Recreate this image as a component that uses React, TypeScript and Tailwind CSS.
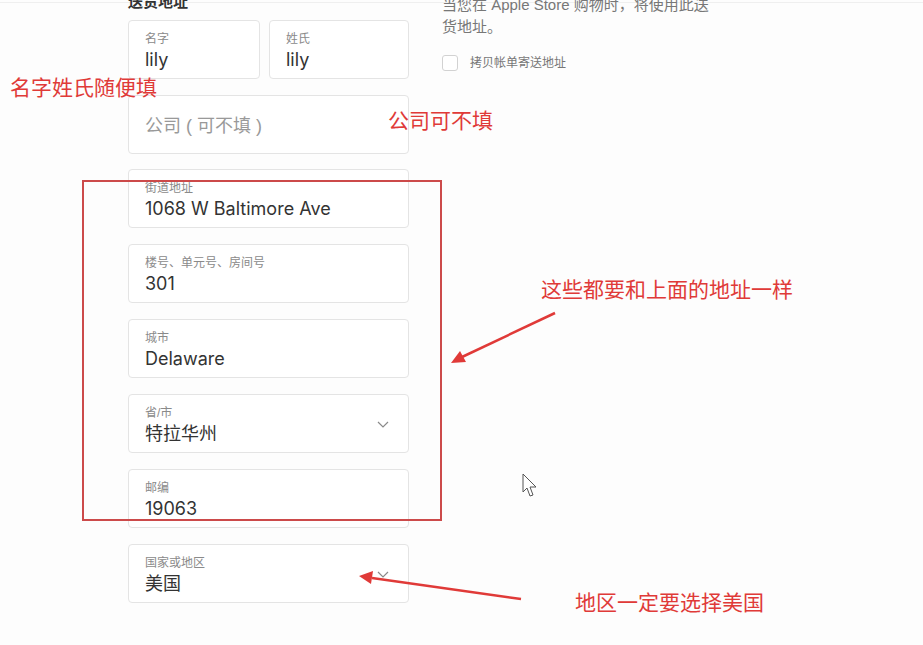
import React from 'react';

const FONT = { fontFamily: '"Liberation Sans", "Noto Sans CJK SC", sans-serif' };
const VALUE_FONT = { fontFamily: 'Inter, "Noto Sans CJK SC", sans-serif' };

function Field({ label, value, select, className = '' }: { label: string; value: string; select?: boolean; className?: string }) {
  return (
    <div className={`relative h-[59px] rounded-[4px] border border-[#e4e4e4] bg-white px-[16px] pt-[11px] ${className}`}>
      <div className="text-[12px] leading-[14px] text-[#8a8a8a]">{label}</div>
      <div className="mt-[3px] text-[18px] leading-[22px] text-[#333]" style={VALUE_FONT}>
        {value}
      </div>
      {select && (
        <svg className="absolute right-[19px] top-[26px]" width="12" height="7" viewBox="0 0 12 7">
          <path d="M1 1l5 5 5-5" fill="none" stroke="#8a8a8a" strokeWidth="1.2" />
        </svg>
      )}
    </div>
  );
}

function Note({ children, className }: { children: React.ReactNode; className: string }) {
  return <div className={`absolute text-[21px] leading-[24px] text-[#e03a38] ${className}`}>{children}</div>;
}

export default function App() {
  return (
    <div className="relative h-[645px] w-[923px] overflow-hidden bg-[#fdfdfd]" style={FONT}>
      <div className="mt-[2px] flex gap-[33px] border-t border-[#efefef] pl-[128px]">
        <div className="flex w-[281px] flex-col">
          <div className="mt-[-11px] text-[15px] font-bold leading-[20px] text-[#333]">送货地址</div>
          <div className="mt-[8px] flex gap-[9px]">
            <Field label="名字" value="lily" className="w-[132px]" />
            <Field label="姓氏" value="lily" className="flex-1" />
          </div>
          <div className="mt-[16px] flex h-[59px] items-center rounded-[4px] border border-[#e4e4e4] bg-white px-[16px] pt-[3px] text-[18px] text-[#999]">
            公司 ( 可不填 )
          </div>
          <div className="mt-[15px] flex flex-col gap-[16px]">
            <Field label="街道地址" value="1068 W Baltimore Ave" />
            <Field label="楼号、单元号、房间号" value="301" />
            <Field label="城市" value="Delaware" />
            <Field label="省/市" value="特拉华州" select />
            <Field label="邮编" value="19063" />
            <Field label="国家或地区" value="美国" select />
          </div>
        </div>
        <div className="w-[278px]">
          <p className="mt-[-9px] text-[15px] leading-[22px] text-[#777]">当您在 Apple Store 购物时，将使用此送货地址。</p>
          <label className="mt-[16px] flex items-center gap-[12px]">
            <span className="h-[16px] w-[16px] rounded-[3px] border border-[#d2d2d2] bg-white" />
            <span className="text-[12px] text-[#777]">拷贝帐单寄送地址</span>
          </label>
        </div>
      </div>

      <div className="absolute left-[82px] top-[180px] h-[341px] w-[360px] border-2 border-[#cc4a4a]" />
      <Note className="left-[10px] top-[76px]">名字姓氏随便填</Note>
      <Note className="left-[388px] top-[109px]">公司可不填</Note>
      <Note className="left-[541px] top-[278px]">这些都要和上面的地址一样</Note>
      <Note className="left-[575px] top-[591px]">地区一定要选择美国</Note>

      <svg className="pointer-events-none absolute left-0 top-0" width="923" height="645">
        <line x1="555" y1="313" x2="462" y2="357" stroke="#e03a38" strokeWidth="2.5" />
        <polygon points="451,363 460,351 466,362" fill="#e03a38" />
        <line x1="521" y1="599" x2="372" y2="578" stroke="#e03a38" strokeWidth="2.5" />
        <polygon points="359,576 373,571 371,584" fill="#e03a38" />
        <path d="M523 474 L523 492 L527 488 L530 496 L533 495 L530 487 L536 487 Z" fill="#fff" stroke="#555" strokeWidth="1" />
      </svg>
    </div>
  );
}
